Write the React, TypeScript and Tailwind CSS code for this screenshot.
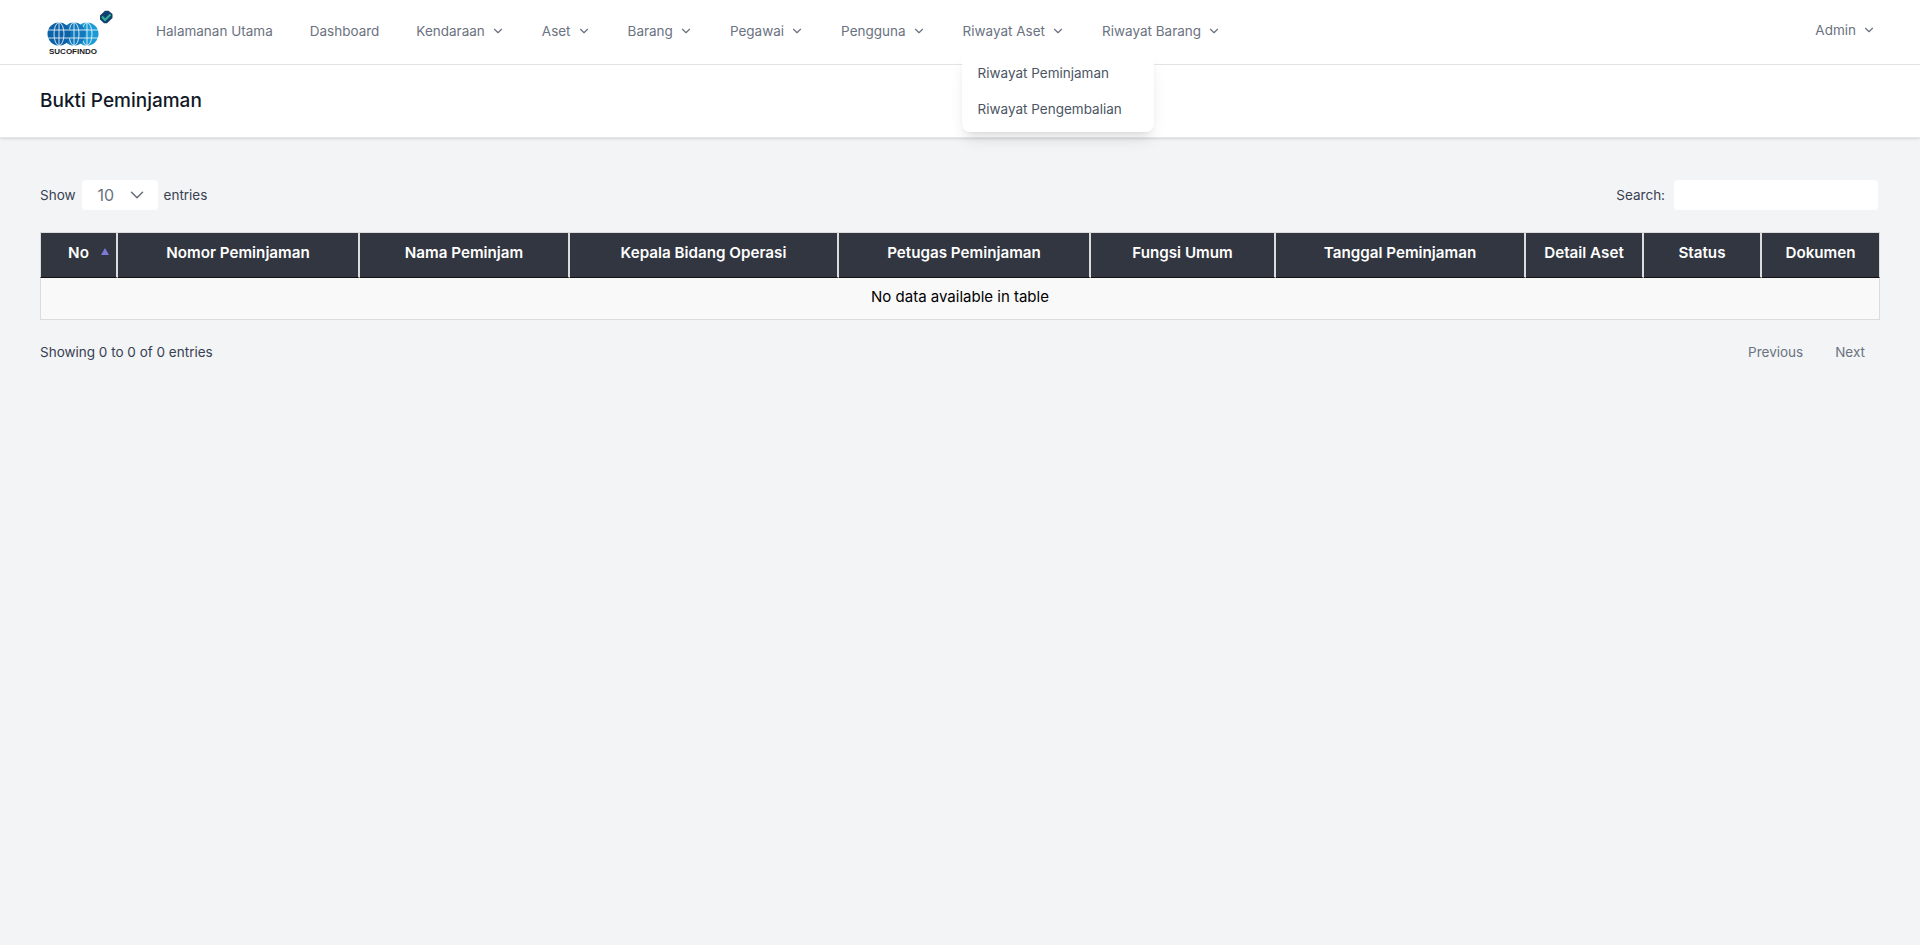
import { ChevronDown } from 'lucide-react'

type NavItem = { label: string; caret?: boolean }

const navItems: NavItem[] = [
  { label: 'Halamanan Utama' },
  { label: 'Dashboard' },
  { label: 'Kendaraan', caret: true },
  { label: 'Aset', caret: true },
  { label: 'Barang', caret: true },
  { label: 'Pegawai', caret: true },
  { label: 'Pengguna', caret: true },
  { label: 'Riwayat Aset', caret: true },
  { label: 'Riwayat Barang', caret: true },
]

const columns = [
  { label: 'No', width: 'w-[78px]' },
  { label: 'Nomor Peminjaman', width: 'w-[242px]' },
  { label: 'Nama Peminjam', width: 'w-[210px]' },
  { label: 'Kepala Bidang Operasi', width: 'w-[269px]' },
  { label: 'Petugas Peminjaman', width: 'w-[252px]' },
  { label: 'Fungsi Umum', width: 'w-[185px]' },
  { label: 'Tanggal Peminjaman', width: 'w-[250px]' },
  { label: 'Detail Aset', width: 'w-[118px]' },
  { label: 'Status', width: 'w-[118px]' },
  { label: 'Dokumen', width: 'w-[118px]' },
]

function Globe({ cx, fill }: { cx: number; fill: string }) {
  return (
    <g>
      <circle cx={cx} cy="12" r="11.5" fill={fill} />
      <g fill="none" stroke="#fff" strokeWidth="0.8">
        <ellipse cx={cx} cy="12" rx="5" ry="11.5" />
        <path d={`M${cx} 0.5V23.5M${cx - 11} 8H${cx + 11}M${cx - 11} 16H${cx + 11}`} />
      </g>
    </g>
  )
}

function Logo() {
  return (
    <div className="relative w-[66px] h-[32px]">
      <svg width="52" height="24" viewBox="0 0 52 24" className="absolute left-0 top-0">
        <Globe cx={40} fill="#1c9ad6" />
        <Globe cx={27} fill="#1279bd" />
        <Globe cx={12} fill="#0b62a8" />
      </svg>
      <span className="absolute left-[-4px] top-[26px] w-[60px] text-center text-[8px] leading-[8px] font-bold text-[#1a1a1a] font-['Liberation_Sans',sans-serif]">SUCOFINDO</span>
      <svg width="14" height="14" viewBox="0 0 14 14" className="absolute left-[52px] top-[-12px]">
        <path d="M1 5.5 6 .8h3.5L13.5 4v4L8 13.2H5L1 9.5Z" fill="#123f6d" />
        <path d="M3 6.5 6 10 11.5 4.5" fill="none" stroke="#2fb29a" strokeWidth="2" />
      </svg>
    </div>
  )
}

export default function App() {
  return (
    <div className="min-h-[945px] bg-[#f3f4f6] font-['Inter',sans-serif] text-[13.5px] text-[#374151]">
      <nav className="h-[65px] bg-white border-b border-[#e5e7eb] flex items-center pl-[47px] pr-[44px]">
        <div className="mt-[12px]">
          <Logo />
        </div>
        <div className="flex items-center gap-[37px] ml-[43px] text-[#6b7280] -mt-[2px]">
          {navItems.map(item => (
            <div key={item.label} className="relative flex items-center gap-[6px]">
              <span>{item.label}</span>
              {item.caret && <ChevronDown size={14} strokeWidth={2} />}
              {item.label === 'Riwayat Aset' && (
                <div className="absolute left-[-1px] top-[31px] z-10 w-[192px] h-[80px] rounded-lg bg-white pt-[3px] shadow-lg text-[#4b5563]">
                  <div className="h-[36px] flex items-center px-4">Riwayat Peminjaman</div>
                  <div className="h-[36px] flex items-center px-4">Riwayat Pengembalian</div>
                </div>
              )}
            </div>
          ))}
        </div>
        <div className="ml-auto flex items-center gap-[6px] text-[#6b7280] -mt-[4px]">
          <span>Admin</span>
          <ChevronDown size={14} strokeWidth={2} />
        </div>
      </nav>

      <header className="h-[73px] bg-white shadow-sm border-b border-[#e5e7eb] flex items-center px-[40px]">
        <h1 className="text-[19px] font-medium text-[#111827]">Bukti Peminjaman</h1>
      </header>

      <main className="px-[40px] pt-[42px]">
        <div className="flex items-center justify-between h-[30px]">
          <div className="flex items-center gap-[6px]">
            <span>Show</span>
            <div className="w-[76px] h-[30px] bg-white rounded flex items-center justify-between pl-4 pr-[10px] text-[16px] text-[#6b7280]">
              <span>10</span>
              <ChevronDown size={22} strokeWidth={1.75} />
            </div>
            <span>entries</span>
          </div>
          <div className="flex items-center gap-[9px] pr-[2px]">
            <span>Search:</span>
            <div className="w-[204px] h-[30px] bg-white rounded" />
          </div>
        </div>

        <table className="mt-[22px] w-[1840px] table-fixed border-separate border-spacing-0">
          <thead>
            <tr className="h-[46px] bg-[#323640] text-white">
              {columns.map(col => (
                <th key={col.label} className={`${col.width} relative border-t border-b border-r-2 border-t-[#dcdcdc] border-r-[#dcdcdc] border-b-[#111] first:border-l last:border-r first:border-l-[#dcdcdc] pb-[3px] text-center text-[15.2px] font-semibold`}>
                  {col.label}
                  {col.label === 'No' && (
                    <span className="absolute right-[7px] top-[15px] w-0 h-0 border-x-[4px] border-x-transparent border-b-[7px] border-b-[#7b7bd6]" />
                  )}
                </th>
              ))}
            </tr>
          </thead>
          <tbody>
            <tr className="h-[42px] bg-[#f9f9f9]">
              <td colSpan={10} className="border-x border-b border-[#dcdcdc] pb-[3px] text-center text-[15px] text-black">
                No data available in table
              </td>
            </tr>
          </tbody>
        </table>

        <div className="flex items-center justify-between mt-[22px]">
          <span>Showing 0 to 0 of 0 entries</span>
          <div className="flex items-center gap-[32px] pr-[15px] text-[#6b7280]">
            <span>Previous</span>
            <span>Next</span>
          </div>
        </div>
      </main>
    </div>
  )
}
